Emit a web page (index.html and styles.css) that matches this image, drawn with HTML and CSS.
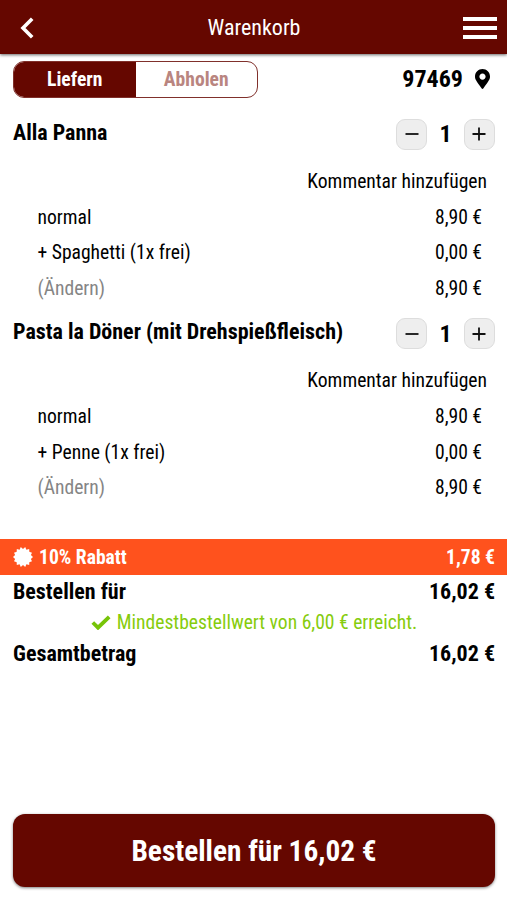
FILE: index.html
```html
<!DOCTYPE html>
<html lang="de">
<head>
    <meta charset="UTF-8">
    <meta name="viewport" content="width=device-width, initial-scale=1.0">
    <title>Warenkorb</title>
    <link rel="stylesheet" href="styles.css">
</head>
<body>
    <header class="navbar">
        <svg class="back" viewBox="0 0 14 22"><path d="M12.2 1.8 L3 11 L12.2 20.2"/></svg>
        <h1>Warenkorb</h1>
        <div class="menu"><span></span><span></span><span></span></div>
    </header>

    <div class="delivery">
        <div class="switch">
            <div class="active">Liefern</div>
            <div class="inactive">Abholen</div>
        </div>
        <div class="zip">
            <span>97469</span>
            <svg class="pin" viewBox="0 0 384 512"><path d="M172 502C27 291 0 270 0 192 0 86 86 0 192 0s192 86 192 192c0 78-27 99-172 310-10 13-30 13-40 0zM192 272c44 0 80-36 80-80s-36-80-80-80-80 36-80 80 36 80 80 80z"/></svg>
        </div>
    </div>

    <main class="cart">
        <div class="item">
            <div class="item-head">
                <h2>Alla Panna</h2>
                <div class="counter">
                    <button><svg viewBox="0 0 14 14"><path d="M0.5 7H13.5"/></svg></button>
                    <span>1</span>
                    <button><svg viewBox="0 0 14 14"><path d="M0.5 7H13.5M7 0.5V13.5"/></svg></button>
                </div>
            </div>
            <div class="comment">Kommentar hinzufügen</div>
            <div class="line"><span>normal</span><span>8,90 €</span></div>
            <div class="line"><span>+ Spaghetti (1x frei)</span><span>0,00 €</span></div>
            <div class="line"><span class="change">(Ändern)</span><span>8,90 €</span></div>
        </div>

        <div class="item">
            <div class="item-head">
                <h2>Pasta la Döner (mit Drehspießfleisch)</h2>
                <div class="counter">
                    <button><svg viewBox="0 0 14 14"><path d="M0.5 7H13.5"/></svg></button>
                    <span>1</span>
                    <button><svg viewBox="0 0 14 14"><path d="M0.5 7H13.5M7 0.5V13.5"/></svg></button>
                </div>
            </div>
            <div class="comment">Kommentar hinzufügen</div>
            <div class="line"><span>normal</span><span>8,90 €</span></div>
            <div class="line"><span>+ Penne (1x frei)</span><span>0,00 €</span></div>
            <div class="line"><span class="change">(Ändern)</span><span>8,90 €</span></div>
        </div>
    </main>

    <div class="discount">
        <svg class="badge" viewBox="0 0 20 20"><path d="M10 2.1L12.2 0L13.4 2.7L16.2 1.9L16.3 4.7L19 5.7L17.9 8L20 10L17.9 12L19 14.3L16.3 15.3L16.2 18.1L13.4 17.3L12.2 20L10 17.9L7.8 20L6.6 17.3L3.8 18.1L3.7 15.3L1 14.3L2.1 12L0 10L2.1 8L1 5.7L3.7 4.7L3.8 1.9L6.6 2.7L7.8 0Z"/></svg>
        <span>10% Rabatt</span>
        <span class="price">1,78 €</span>
    </div>

    <div class="totals">
        <div class="total"><span>Bestellen für</span><span>16,02 €</span></div>
        <div class="minimum">
            <svg class="check" viewBox="0 0 20 15"><path d="M1.8 7.5L7 12.7L18.2 1.8"/></svg>
            <span>Mindestbestellwert von 6,00 € erreicht.</span>
        </div>
        <div class="total"><span>Gesamtbetrag</span><span>16,02 €</span></div>
    </div>

    <button class="order">Bestellen für 16,02 €</button>
</body>
</html>
```
FILE: styles.css
```css
* {
    box-sizing: border-box;
}

body {
    margin: 0;
    height: 900px;
    display: flex;
    flex-direction: column;
    background: white;
    color: #000;
    font-family: "Roboto Condensed", Roboto, sans-serif;
    font-stretch: 75%;
    font-size: 19.6px;
}

h1, h2 {
    margin: 0;
    font-size: 22px;
}

svg {
    display: block;
}

.navbar {
    height: 54px;
    padding: 0 10px 0 20px;
    display: flex;
    align-items: center;
    justify-content: space-between;
    background: #650700;
    color: white;
    box-shadow: 0 1px 3px rgba(0, 0, 0, 0.6);
}

.navbar h1 {
    font-weight: 400;
    padding-left: 11px;
}

.back {
    width: 14px;
    height: 22px;
    margin-top: 2px;
    fill: none;
    stroke: white;
    stroke-width: 3.6;
}

.menu {
    width: 34px;
    margin-top: 2px;
    display: flex;
    flex-direction: column;
    gap: 5px;
}

.menu span {
    height: 4px;
    background: white;
}

.delivery {
    display: flex;
    justify-content: space-between;
    padding: 7px 17px 0 13px;
    height: 52px;
}

.switch {
    display: flex;
    width: 245px;
    height: 37px;
    border: 1px solid #80302b;
    border-radius: 11px;
    overflow: hidden;
    font-weight: 700;
    text-align: center;
    line-height: 35px;
}

.switch div {
    flex: 1;
}

.active {
    background: #650700;
    color: white;
}

.inactive {
    color: #b98580;
}

.zip {
    display: flex;
    align-items: center;
    gap: 12px;
    height: 36px;
    font-size: 24px;
    font-weight: 700;
}

.pin {
    width: 15px;
    height: 20px;
}

.item {
    padding: 0 12px 0 13px;
}

.item-head {
    display: flex;
    justify-content: space-between;
    align-items: center;
    height: 56.5px;
}

.item-head h2 {
    padding-bottom: 4px;
}

.counter {
    display: flex;
    align-items: center;
    width: 99px;
    justify-content: space-between;
    font-size: 24px;
    font-weight: 700;
}

.counter button {
    width: 31px;
    height: 31px;
    padding: 0;
    display: flex;
    align-items: center;
    justify-content: center;
    background: #eee;
    border: 1px solid #ddd;
    border-radius: 9px;
}

.counter svg {
    width: 14px;
    height: 14px;
    stroke: #111;
    stroke-width: 1.8;
}

.comment {
    height: 36.3px;
    line-height: 37px;
    padding-right: 8px;
    text-align: right;
}

.line {
    display: flex;
    justify-content: space-between;
    height: 35.5px;
    line-height: 37px;
    padding: 0 13px 0 24.5px;
}

.change {
    color: #858585;
}

.discount {
    display: flex;
    align-items: center;
    height: 36px;
    margin-top: 34px;
    padding: 1px 12px 0 13px;
    background: #ff521d;
    color: white;
    font-weight: 700;
}

.badge {
    width: 20px;
    height: 20px;
    margin-right: 6px;
    fill: white;
}

.price {
    margin-left: auto;
}

.totals {
    padding: 1px 12px 0 13px;
    line-height: 31px;
}

.total {
    display: flex;
    justify-content: space-between;
    font-size: 22px;
    font-weight: 700;
}

.minimum {
    display: flex;
    align-items: center;
    justify-content: center;
    gap: 6px;
    color: #86cc0d;
}

.check {
    width: 20px;
    height: 15px;
    fill: none;
    stroke: #77c408;
    stroke-width: 3.8;
}

.order {
    height: 73px;
    margin: auto 12px 13px 13px;
    border: none;
    border-radius: 12px;
    background: #650700;
    color: white;
    font-family: inherit;
    font-stretch: inherit;
    font-size: 29.3px;
    font-weight: 700;
    box-shadow: 0 1px 3px rgba(0, 0, 0, 0.5);
}
```
